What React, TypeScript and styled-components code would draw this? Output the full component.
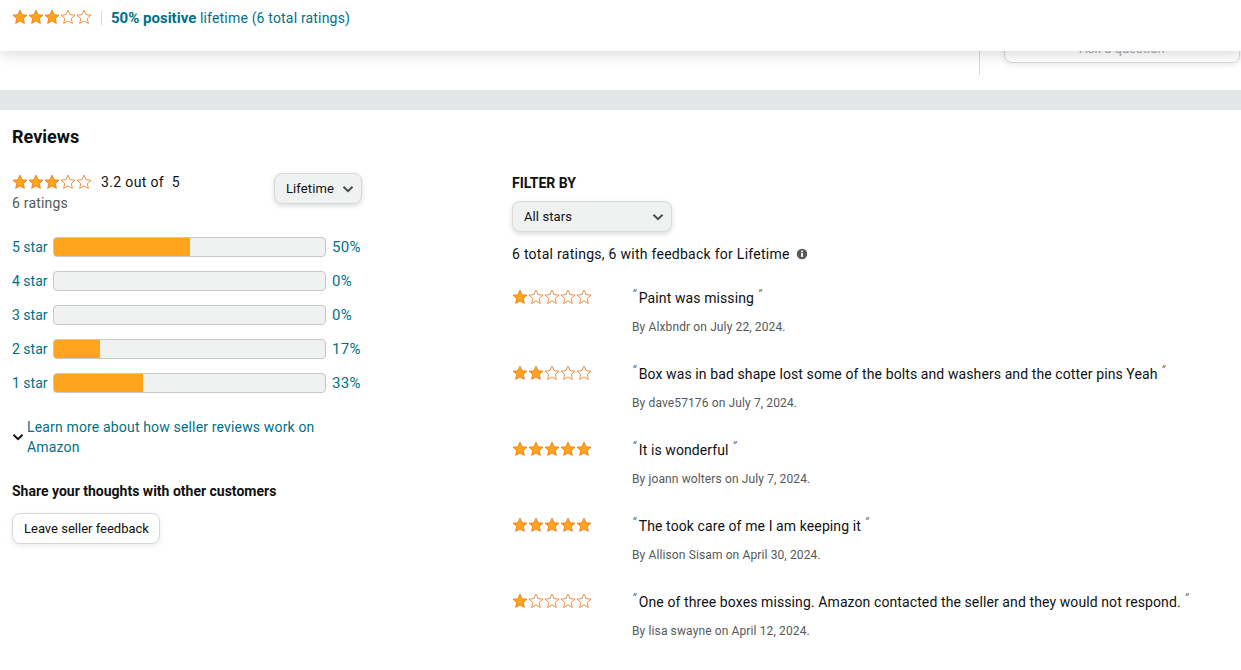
import React, { FC } from 'react'
import styled, { createGlobalStyle } from 'styled-components'

const GlobalStyle = createGlobalStyle`
    html, body {
        margin: 0;
        padding: 0;
        background: #fff;
        color: #0f1111;
        font-family: Roboto, "Liberation Sans", sans-serif;
        font-size: 14px;
    }
    * { box-sizing: border-box; }
`;

const Page = styled.div`
    position: relative;
    width: 1241px;
    height: 670px;
    overflow: hidden;
`;

const StickyBar = styled.div`
    position: absolute;
    top: 0;
    left: 0;
    right: 0;
    height: 51px;
    background: #fff;
    box-shadow: 0 2px 14px rgba(15, 17, 17, 0.18);
    display: flex;
    align-items: flex-start;
    padding: 9px 12px 0;
`;

const BarDivider = styled.span`
    width: 1px;
    height: 14px;
    background: #d5d9d9;
    margin: 2px 9px 0 9px;
`;

const BarText = styled.a`
    color: #007185;
    font-size: 14px;
    line-height: 18px;
    letter-spacing: 0.18px;
    b { font-weight: 700; font-size: 15px; letter-spacing: 0; }
`;

const Under = styled.div`
    height: 90px;
    display: flex;
    justify-content: flex-end;
    padding-right: 1px;
`;

const UnderRule = styled.div`
    width: 1px;
    height: 75px;
    background: #d5d9d9;
    margin-right: 24px;
`;

const AskButton = styled.div`
    width: 236px;
    height: 63px;
    border: 1px solid #d5d9d9;
    border-radius: 8px;
    box-shadow: 0 2px 5px rgba(213, 217, 217, 0.5);
    display: flex;
    align-items: flex-end;
    justify-content: center;
    padding-bottom: 6px;
    font-size: 13px;
    color: #a8abab;
`;

const GreyBand = styled.div`
    height: 20px;
    background: #e3e6e6;
`;

const Content = styled.div`
    display: grid;
    grid-template-columns: 500px 1fr;
    padding: 16px 0 0 12px;
`;

const Heading = styled.h2`
    grid-column: 1 / 3;
    margin: 0 0 24px;
    font-size: 18px;
    line-height: 22px;
    font-weight: 700;
`;

const LeftCol = styled.div`
    width: 350px;
`;

const SummaryRow = styled.div`
    display: flex;
    justify-content: space-between;
    align-items: flex-start;
    height: 65px;
    padding-top: 1px;
`;

const SummaryLine = styled.div`
    display: flex;
    align-items: center;
    height: 18px;
    font-size: 14px;
    letter-spacing: 0.35px;
    margin-bottom: 3px;
    gap: 9px;
`;

const Muted = styled.div`
    color: #565959;
    font-size: 14px;
    line-height: 18px;
    letter-spacing: 0.2px;
    margin-top: 1px;
`;

const Dropdown = styled.div<{ $width: number }>`
    width: ${p => p.$width}px;
    height: 31px;
    background: #f0f2f2;
    border: 1px solid #d5d9d9;
    border-radius: 8px;
    box-shadow: 0 2px 5px rgba(15, 17, 17, 0.15);
    display: flex;
    align-items: center;
    justify-content: space-between;
    padding: 0 7px 0 11px;
    font-size: 13px;
    letter-spacing: 0.1px;
    color: #0f1111;
`;

const BarRow = styled.div`
    display: flex;
    align-items: center;
    height: 20px;
    margin-bottom: 14px;
    color: #007185;
    font-size: 14px;
`;

const BarLabel = styled.span`
    width: 41px;
    white-space: nowrap;
`;

const BarTrack = styled.div`
    width: 273px;
    height: 20px;
    background: #f0f2f2;
    border: 1px solid #c4c8c8;
    border-radius: 4px;
    overflow: hidden;
    margin-right: 6px;
`;

const BarFill = styled.div`
    background: #ffa41c;
    border: 1px solid #e47911;
    border-right: 0;
    margin: -1px 0 0 -1px;
    height: 20px;
    border-radius: 4px 0 0 4px;
`;

const BarPercent = styled.span`
    font-size: 15px;
    letter-spacing: 0.3px;
`;

const LearnRow = styled.div`
    display: flex;
    align-items: center;
    margin-top: 24px;
    color: #007185;
    font-size: 14px;
    line-height: 20px;
    letter-spacing: 0.16px;
    gap: 3px;
`;

const ShareTitle = styled.div`
    margin-top: 25px;
    font-size: 14px;
    line-height: 18px;
    font-weight: 700;
`;

const FeedbackButton = styled.div`
    display: inline-flex;
    align-items: center;
    margin-top: 13px;
    height: 31px;
    padding: 0 10px 0 11px;
    border: 1px solid #d5d9d9;
    border-radius: 8px;
    background: #fff;
    box-shadow: 0 2px 5px rgba(213, 217, 217, 0.5);
    font-size: 13px;
`;

const RightCol = styled.div`
    margin-top: 2px;
`;

const FilterLabel = styled.div`
    font-size: 14px;
    line-height: 18px;
    font-weight: 700;
    margin-bottom: 9px;
`;

const TotalLine = styled.div`
    display: flex;
    align-items: center;
    gap: 6px;
    margin-top: 13px;
    font-size: 14px;
    line-height: 18px;
    letter-spacing: 0.27px;
    margin-bottom: 26px;
`;

const Review = styled.div`
    display: grid;
    grid-template-columns: 120px 1fr;
    height: 76px;
`;

const Quote = styled.div`
    font-size: 14px;
    line-height: 18px;
    letter-spacing: 0.1px;
    i {
        color: #565959;
        font-style: italic;
        font-weight: 300;
        font-size: 14px;
        line-height: 0;
        vertical-align: 3px;
        margin-right: 2.5px;
    }
`;

const ByLine = styled.div`
    margin-top: 12px;
    color: #565959;
    font-size: 12px;
    line-height: 16px;
    letter-spacing: 0.12px;
`;

const StarsWrap = styled.span`
    display: inline-flex;
    width: 80px;
    height: 16px;
    flex: none;
`;

const STAR = 'M8 1.1l2.05 4.55 4.95.55-3.7 3.3 1.05 4.9L8 11.9l-4.35 2.5 1.05-4.9L1 6.2l4.95-.55z';

const Stars: FC<{ count: number }> = ({ count }) => (
    <StarsWrap>
        {[0, 1, 2, 3, 4].map(i => (
            <svg key={i} width="16" height="16" viewBox="0 0 16 16">
                <path
                    d={STAR}
                    fill={i < count ? '#ffa41c' : '#fff'}
                    stroke="#e47911"
                    strokeWidth="0.8"
                    strokeLinejoin="miter"
                />
            </svg>
        ))}
    </StarsWrap>
);

const Chevron: FC<{ size?: number; color?: string; weight?: number }> = ({ size = 12, color = '#494d4d', weight = 2 }) => (
    <svg width={size} height={size} viewBox="0 0 12 12" style={{ flex: 'none' }}>
        <path d="M1.5 3.8L6 8.2l4.5-4.4" fill="none" stroke={color} strokeWidth={weight} />
    </svg>
);

const InfoIcon: FC = () => (
    <svg width="12" height="12" viewBox="0 0 12 12">
        <circle cx="6" cy="6" r="5.2" fill="#565959" />
        <rect x="5.1" y="5" width="1.8" height="4" fill="#fff" />
        <rect x="5.1" y="2.6" width="1.8" height="1.6" fill="#fff" />
    </svg>
);

const bars = [
    { label: '5 star', pct: 50 },
    { label: '4 star', pct: 0 },
    { label: '3 star', pct: 0 },
    { label: '2 star', pct: 17 },
    { label: '1 star', pct: 33 },
];

const reviews = [
    { stars: 1, text: 'Paint was missing', by: 'By Alxbndr on July 22, 2024.' },
    { stars: 2, text: 'Box was in bad shape lost some of the bolts and washers and the cotter pins Yeah', by: 'By dave57176 on July 7, 2024.' },
    { stars: 5, text: 'It is wonderful', by: 'By joann wolters on July 7, 2024.' },
    { stars: 5, text: 'The took care of me I am keeping it', by: 'By Allison Sisam on April 30, 2024.' },
    { stars: 1, text: 'One of three boxes missing. Amazon contacted the seller and they would not respond.', by: 'By lisa swayne on April 12, 2024.' },
];

const App: FC = () => {
    return (
        <Page>
            <GlobalStyle />
            <Under>
                <UnderRule />
                <AskButton>Ask a question</AskButton>
            </Under>
            <StickyBar>
                <Stars count={3} />
                <BarDivider />
                <BarText><b>50% positive</b> lifetime (6 total ratings)</BarText>
            </StickyBar>
            <GreyBand />
            <Content>
                <Heading>Reviews</Heading>
                <LeftCol>
                    <SummaryRow>
                        <div>
                            <SummaryLine>
                                <Stars count={3} />
                                <span>3.2 out of&nbsp; 5</span>
                            </SummaryLine>
                            <Muted>6 ratings</Muted>
                        </div>
                        <Dropdown $width={88}>Lifetime <Chevron /></Dropdown>
                    </SummaryRow>
                    {bars.map(b => (
                        <BarRow key={b.label}>
                            <BarLabel>{b.label}</BarLabel>
                            <BarTrack>
                                {b.pct > 0 && <BarFill style={{ width: `calc(${b.pct}% + 1px)` }} />}
                            </BarTrack>
                            <BarPercent>{b.pct}%</BarPercent>
                        </BarRow>
                    ))}
                    <LearnRow>
                        <Chevron color="#0f1111" />
                        <span>Learn more about how seller reviews work on Amazon</span>
                    </LearnRow>
                    <ShareTitle>Share your thoughts with other customers</ShareTitle>
                    <FeedbackButton>Leave seller feedback</FeedbackButton>
                </LeftCol>
                <RightCol>
                    <FilterLabel>FILTER BY</FilterLabel>
                    <Dropdown $width={160}>All stars <Chevron /></Dropdown>
                    <TotalLine>6 total ratings, 6 with feedback for Lifetime <InfoIcon /></TotalLine>
                    {reviews.map(r => (
                        <Review key={r.by}>
                            <Stars count={r.stars} />
                            <div>
                                <Quote><i>“</i>{r.text} <i>”</i></Quote>
                                <ByLine>{r.by}</ByLine>
                            </div>
                        </Review>
                    ))}
                </RightCol>
            </Content>
        </Page>
    )
}

export default App;
